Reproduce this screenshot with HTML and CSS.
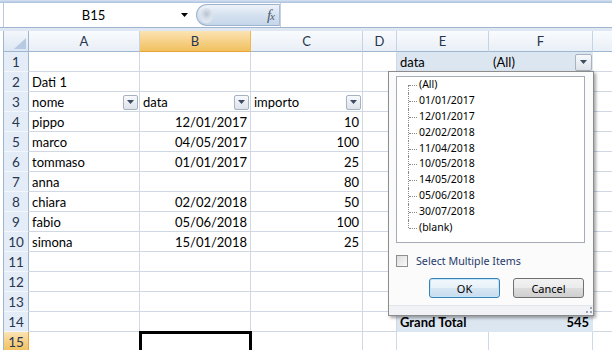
FILE: index.html
```html
<!DOCTYPE html>
<html>
<head>
<meta charset="utf-8">
<link rel="stylesheet" href="styles.css">
</head>
<body>
<div class="app">
  <div class="ribbon-edge"></div>
  <div class="formula-bar">
    <div class="namebox">
      <span class="name">B15</span>
      <svg class="nb-arrow" width="7" height="4" viewBox="0 0 7 4"><polygon points="0,0 7,0 3.5,4" fill="#000"/></svg>
    </div>
    <div class="fx-pill">
      <span class="knob"></span>
      <span class="fx"><i>f</i><i class="x">x</i></span>
    </div>
    <div class="formula-input"></div>
  </div>
  <div class="bar-gap"></div>

  <div class="sheet">
    <!-- header row -->
    <div class="corner"><svg width="12" height="11" viewBox="0 0 12 11"><polygon points="12,0 12,11 0,11" fill="#b6cae3"/></svg></div>
    <div class="ch">A</div><div class="ch sel">B</div><div class="ch">C</div><div class="ch">D</div><div class="ch">E</div><div class="ch">F</div><div class="ch last"></div>

    <!-- row 1 -->
    <div class="rh">1</div><div class="c"></div><div class="c"></div><div class="c"></div><div class="c"></div>
    <div class="c pv">data</div>
    <div class="c pv pvf"><span class="pv-all">(All)</span><span class="fbtn big"><svg width="7" height="4" viewBox="0 0 7 4"><polygon points="0,0 7,0 3.5,4" fill="#3c4a62"/></svg></span></div>
    <div class="c"></div>

    <!-- row 2 -->
    <div class="rh">2</div><div class="c">Dati 1</div><div class="c"></div><div class="c"></div><div class="c"></div><div class="c"></div><div class="c"></div><div class="c"></div>

    <!-- row 3 -->
    <div class="rh">3</div>
    <div class="c hf"><span>nome</span><span class="fbtn"><svg width="7" height="4" viewBox="0 0 7 4"><polygon points="0,0 7,0 3.5,4" fill="#3c4a62"/></svg></span></div>
    <div class="c hf"><span>data</span><span class="fbtn"><svg width="7" height="4" viewBox="0 0 7 4"><polygon points="0,0 7,0 3.5,4" fill="#3c4a62"/></svg></span></div>
    <div class="c hf"><span>importo</span><span class="fbtn"><svg width="7" height="4" viewBox="0 0 7 4"><polygon points="0,0 7,0 3.5,4" fill="#3c4a62"/></svg></span></div>
    <div class="c"></div><div class="c"></div><div class="c"></div><div class="c"></div>

    <!-- row 4 -->
    <div class="rh">4</div><div class="c">pippo</div><div class="c r">12/01/2017</div><div class="c r">10</div><div class="c"></div><div class="c"></div><div class="c"></div><div class="c"></div>
    <!-- row 5 -->
    <div class="rh">5</div><div class="c">marco</div><div class="c r">04/05/2017</div><div class="c r">100</div><div class="c"></div><div class="c"></div><div class="c"></div><div class="c"></div>
    <!-- row 6 -->
    <div class="rh">6</div><div class="c">tommaso</div><div class="c r">01/01/2017</div><div class="c r">25</div><div class="c"></div><div class="c"></div><div class="c"></div><div class="c"></div>
    <!-- row 7 -->
    <div class="rh">7</div><div class="c">anna</div><div class="c r"></div><div class="c r">80</div><div class="c"></div><div class="c"></div><div class="c"></div><div class="c"></div>
    <!-- row 8 -->
    <div class="rh">8</div><div class="c">chiara</div><div class="c r">02/02/2018</div><div class="c r">50</div><div class="c"></div><div class="c"></div><div class="c"></div><div class="c"></div>
    <!-- row 9 -->
    <div class="rh">9</div><div class="c">fabio</div><div class="c r">05/06/2018</div><div class="c r">100</div><div class="c"></div><div class="c"></div><div class="c"></div><div class="c"></div>
    <!-- row 10 -->
    <div class="rh">10</div><div class="c">simona</div><div class="c r">15/01/2018</div><div class="c r">25</div><div class="c"></div><div class="c"></div><div class="c"></div><div class="c"></div>
    <!-- row 11 -->
    <div class="rh">11</div><div class="c"></div><div class="c"></div><div class="c"></div><div class="c"></div><div class="c"></div><div class="c"></div><div class="c"></div>
    <!-- row 12 -->
    <div class="rh">12</div><div class="c"></div><div class="c"></div><div class="c"></div><div class="c"></div><div class="c"></div><div class="c"></div><div class="c"></div>
    <!-- row 13 -->
    <div class="rh">13</div><div class="c"></div><div class="c"></div><div class="c"></div><div class="c"></div><div class="c"></div><div class="c"></div><div class="c"></div>
    <!-- row 14 -->
    <div class="rh">14</div><div class="c"></div><div class="c"></div><div class="c"></div><div class="c"></div>
    <div class="c pv b">Grand Total</div><div class="c pv b r">545</div><div class="c"></div>
    <!-- row 15 -->
    <div class="rh sel">15</div><div class="c"></div><div class="c active"></div><div class="c"></div><div class="c"></div><div class="c"></div><div class="c"></div><div class="c"></div>
  </div>

  <div class="popup">
    <ul class="listbox">
      <li>(All)</li>
      <li>01/01/2017</li>
      <li>12/01/2017</li>
      <li>02/02/2018</li>
      <li>11/04/2018</li>
      <li>10/05/2018</li>
      <li>14/05/2018</li>
      <li>05/06/2018</li>
      <li>30/07/2018</li>
      <li>(blank)</li>
    </ul>
    <label class="multi"><span class="cbox"></span><span class="multi-text">Select Multiple Items</span></label>
    <div class="buttons">
      <button class="btn ok">OK</button>
      <button class="btn">Cancel</button>
    </div>
    <div class="grip-strip">
      <svg width="7" height="7" viewBox="0 0 7 7"><rect x="5" y="0" width="2" height="2" fill="#9aa5b3"/><rect x="5" y="4" width="2" height="2" fill="#9aa5b3"/><rect x="1" y="4" width="2" height="2" fill="#9aa5b3"/></svg>
    </div>
  </div>
</div>
</body>
</html>
```

FILE: styles.css
```css
* { box-sizing: border-box; margin: 0; padding: 0; }

html, body {
  width: 612px;
  height: 350px;
  overflow: hidden;
  background: #ffffff;
}

body {
  font-family: Lato, "Liberation Sans", sans-serif;
  font-size: 13px;
  color: #000;
}

.app {
  position: relative;
  width: 612px;
  height: 350px;
  overflow: hidden;
  background: #ffffff;
}

/* ---------- top ribbon edge & formula bar ---------- */
.ribbon-edge {
  height: 3px;
  background: linear-gradient(#d6e2f1, #a9c0de);
}

.formula-bar {
  display: flex;
  height: 25px;
  border-bottom: 1px solid #9fb5d2;
  background: #ffffff;
  padding-left: 3px;
}

.namebox {
  width: 193px;
  display: flex;
  align-items: center;
  border-left: 1px solid #b9c9dd;
}

.namebox .name {
  flex: 1;
  text-align: center;
  font-size: 13px;
  padding-left: 2px;
}

.nb-arrow {
  margin-right: 8px;
}

.fx-pill {
  width: 84px;
  height: 22px;
  margin-top: 1px;
  display: flex;
  align-items: center;
  justify-content: space-between;
  border: 1px solid #9db2cd;
  border-right: 1px solid #a9bbd2;
  border-radius: 11px 0 0 11px;
  background: linear-gradient(#eef3fa, #d3e0ef 55%, #c6d6ea);
  padding: 0 5px 0 3px;
}

.knob {
  width: 13px;
  height: 15px;
  border-radius: 50%;
  background: radial-gradient(circle at 50% 40%, #b8c2cf 0, #d6dee9 40%, #eef2f8 100%);
}

.fx {
  font-family: "Liberation Serif", serif;
  font-size: 15px;
  color: #4e5a6a;
  letter-spacing: -1px;
}
.fx .x {
  font-size: 11px;
}

.formula-input {
  flex: 1;
  background: #fff;
  border-left: 1px solid #c3d1e2;
}

.bar-gap {
  height: 3px;
  background: #dfe7f2;
}

/* ---------- sheet grid ---------- */
.sheet {
  display: grid;
  grid-template-columns: 25px 111px 111px 112px 34px 92px 104px 23px;
  grid-template-rows: 21px repeat(15, 20px);
  margin-left: 3px;
  border-left: 1px solid #9eb6ce;
}

.corner {
  background: linear-gradient(#f3f7fc, #dde7f3);
  border-right: 1px solid #9eb6ce;
  border-bottom: 1px solid #9eb6ce;
  display: flex;
  align-items: flex-end;
  justify-content: flex-end;
  padding: 0 2px 2px 0;
}

.ch {
  display: flex;
  align-items: center;
  justify-content: center;
  background: linear-gradient(#f9fbfd, #e9eff7);
  border-right: 1px solid #c5d3e3;
  border-bottom: 1px solid #9eb6ce;
  color: #27364f;
  font-size: 13px;
}
.ch.last { border-right: none; }

.ch.sel {
  background: linear-gradient(#fbe3b3, #f6cf84 55%, #f1c15f);
  border-right: 1px solid #f2b550;
  border-bottom: 1px solid #e9a33c;
}

.rh {
  display: flex;
  align-items: center;
  justify-content: center;
  background: #e4ecf7;
  border-right: 1px solid #9eb6ce;
  border-bottom: 1px solid #f3f7fb;
  color: #27364f;
  font-size: 13.5px;
  padding-top: 1px;
}

.rh.sel {
  background: linear-gradient(#fbe3b3, #f6cf84 55%, #f1c15f);
  border-right: 1px solid #e9a33c;
}

.c {
  display: flex;
  align-items: center;
  padding: 1px 3px 0 3px;
  border-right: 1px solid #d0d7e5;
  border-bottom: 1px solid #d0d7e5;
  white-space: nowrap;
  overflow: hidden;
  font-size: 13px;
}

.c.r { justify-content: flex-end; padding-right: 3px; }

.c.hf {
  justify-content: space-between;
  padding-right: 1px;
}

.c.pv {
  background: #dce6f1;
  border-right-color: #dce6f1;
  border-bottom-color: #dce6f1;
}
.c.pvf {
  justify-content: space-between;
  padding-right: 0;
}
.pv-all { padding-left: 1px; }

.c.b { font-weight: 700; }

.c.active {
  position: relative;
  z-index: 2;
  outline: 3px solid #000;
  outline-offset: -2px;
}

.fbtn {
  width: 15px;
  height: 15px;
  display: flex;
  align-items: center;
  justify-content: center;
  border: 1px solid #a7b2c1;
  border-radius: 2px;
  background: linear-gradient(#f7f9fc, #dde3ea);
}
.fbtn.big {
  width: 17px;
  height: 17px;
}

/* ---------- filter popup ---------- */
.popup {
  position: absolute;
  left: 388px;
  top: 71px;
  width: 206px;
  height: 245px;
  background: #fbfbfb;
  border: 1px solid #8c8c8c;
  box-shadow: 2px 2px 3px rgba(0, 0, 0, 0.35);
  display: flex;
  flex-direction: column;
  font-family: "Noto Sans", "Open Sans", sans-serif;
  font-size: 10.5px;
}

.listbox {
  list-style: none;
  margin: 4px 0 0 7px;
  width: 189px;
  height: 167px;
  border: 1px solid #a5acb5;
  background: #fff;
}

.listbox li {
  position: relative;
  height: 15.9px;
  line-height: 15px;
  padding-left: 22px;
  color: #000;
}

.listbox li::before {
  content: "";
  position: absolute;
  left: 11px;
  top: 0;
  bottom: 0;
  border-left: 1px dotted #8a8a8a;
}
.listbox li:first-child::before { top: 8px; }
.listbox li:last-child::before { bottom: 8px; }

.listbox li::after {
  content: "";
  position: absolute;
  left: 12px;
  top: 8px;
  width: 8px;
  border-top: 1px dotted #8a8a8a;
}

.multi {
  display: flex;
  align-items: center;
  margin: 10px 0 0 7px;
  height: 16px;
}

.cbox {
  width: 12px;
  height: 12px;
  border: 1px solid #8f8f8f;
  background: linear-gradient(135deg, #dcdcdc, #fbfbfb);
  margin-right: 8px;
}

.multi-text {
  color: #1f3a6b;
  font-size: 10.7px;
}

.buttons {
  display: flex;
  justify-content: flex-end;
  gap: 13px;
  margin: 9px 9px 0 0;
}

.btn {
  width: 71px;
  height: 20px;
  font-family: "Noto Sans", "Open Sans", sans-serif;
  font-size: 11px;
  color: #000;
  border: 1px solid #707070;
  border-radius: 3px;
  background: linear-gradient(#f2f2f2 0, #ebebeb 50%, #dddddd 51%, #cfcfcf 100%);
}

.btn.ok {
  border-color: #3c7fb1;
  box-shadow: inset 0 0 0 1px #bfe6fb;
  background: linear-gradient(#f3f9fd 0, #e6f1f9 50%, #d6e6f3 51%, #c8dcee 100%);
}

.grip-strip {
  margin-top: auto;
  height: 10px;
  border-top: 1px solid #e2e5ea;
  background: #f0f2f5;
  display: flex;
  justify-content: flex-end;
  align-items: flex-end;
  padding: 0 1px 1px 0;
}
```
